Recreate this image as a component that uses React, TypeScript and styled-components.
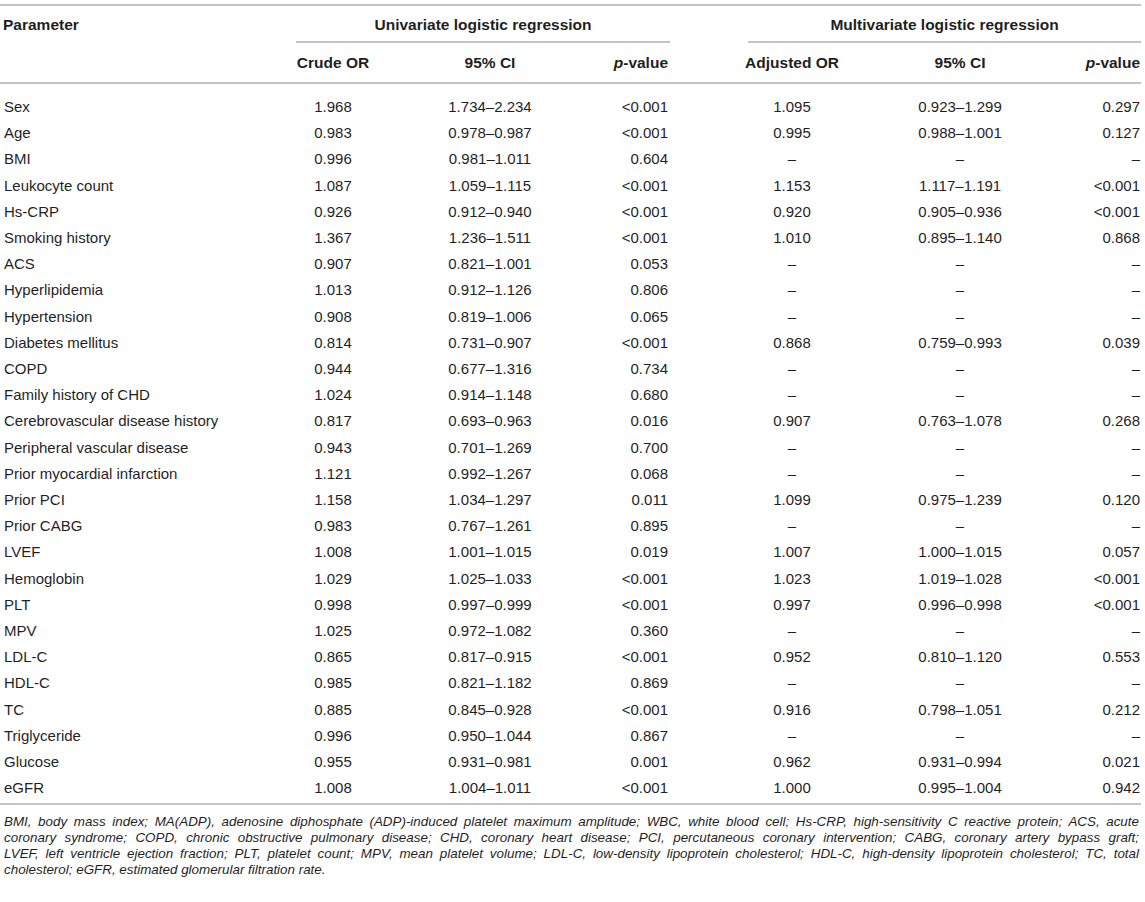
import React from "react";
import styled, { createGlobalStyle } from "styled-components";

const GlobalStyle = createGlobalStyle`
  html, body { margin: 0; padding: 0; background: #ffffff; }
  body {
    font-family: "Liberation Sans", Arial, Helvetica, sans-serif;
    color: #1f1f1f;
  }
`;

type Align = "left" | "center" | "right";

const LINE = "#c4c4c4";

const Page = styled.div`
  width: 1145px;
  padding-top: 4px;
`;

const Table = styled.table`
  width: 1141px;
  table-layout: fixed;
  border-collapse: separate;
  border-spacing: 0;
  border-top: 2px solid ${LINE};
  border-bottom: 2px solid ${LINE};
`;

const ParamHead = styled.th`
  text-align: left;
  vertical-align: top;
  font-weight: 700;
  font-size: 15.5px;
  line-height: 32px;
  padding: 3px 0 0 3px;
  border-bottom: 2px solid ${LINE};
`;

const GroupHead = styled.th`
  padding: 0;
  vertical-align: top;
`;

const GroupTitle = styled.div<{ $left: number; $right: number }>`
  margin: 0 ${(p) => p.$right}px 0 ${(p) => p.$left}px;
  padding-top: 3px;
  line-height: 32px;
  font-weight: 700;
  font-size: 15.5px;
  text-align: center;
  white-space: nowrap;
  border-bottom: 2px solid ${LINE};
`;

const SubHead = styled.th<{ $align: Align; $pr: number }>`
  text-align: ${(p) => p.$align};
  padding: 0 ${(p) => p.$pr}px 0 0;
  font-weight: 700;
  font-size: 15.5px;
  line-height: 39px;
  white-space: nowrap;
  border-bottom: 2px solid ${LINE};
`;

const Row = styled.tr`
  &:first-child > td {
    padding-top: 10px;
  }
  &:last-child > td {
    padding-bottom: 1.5px;
  }
`;

const Cell = styled.td<{ $align: Align; $pl: number; $pr: number }>`
  text-align: ${(p) => p.$align};
  padding: 0 ${(p) => p.$pr}px 0 ${(p) => p.$pl}px;
  font-size: 15px;
  line-height: 26.2px;
  white-space: nowrap;
`;

const Footnote = styled.div`
  margin-top: 9px;
  width: 1135px;
  padding-left: 4px;
  font-style: italic;
  font-size: 13.4px;
  line-height: 16px;
`;

const FootLine = styled.div<{ $justify: boolean }>`
  white-space: nowrap;
  text-align: ${(p) => (p.$justify ? "justify" : "left")};
  text-align-last: ${(p) => (p.$justify ? "justify" : "left")};
`;

const colWidths = [290, 86, 228, 68, 240, 96, 133];
const colAlign: Align[] = ["left", "center", "center", "right", "center", "center", "right"];
const colPl = [4, 0, 0, 0, 0, 0, 0];
const colPr = [0, 0, 0, 4, 0, 0, 1];

const rows: string[][] = [
  ["Sex", "1.968", "1.734–2.234", "<0.001", "1.095", "0.923–1.299", "0.297"],
  ["Age", "0.983", "0.978–0.987", "<0.001", "0.995", "0.988–1.001", "0.127"],
  ["BMI", "0.996", "0.981–1.011", "0.604", "–", "–", "–"],
  ["Leukocyte count", "1.087", "1.059–1.115", "<0.001", "1.153", "1.117–1.191", "<0.001"],
  ["Hs-CRP", "0.926", "0.912–0.940", "<0.001", "0.920", "0.905–0.936", "<0.001"],
  ["Smoking history", "1.367", "1.236–1.511", "<0.001", "1.010", "0.895–1.140", "0.868"],
  ["ACS", "0.907", "0.821–1.001", "0.053", "–", "–", "–"],
  ["Hyperlipidemia", "1.013", "0.912–1.126", "0.806", "–", "–", "–"],
  ["Hypertension", "0.908", "0.819–1.006", "0.065", "–", "–", "–"],
  ["Diabetes mellitus", "0.814", "0.731–0.907", "<0.001", "0.868", "0.759–0.993", "0.039"],
  ["COPD", "0.944", "0.677–1.316", "0.734", "–", "–", "–"],
  ["Family history of CHD", "1.024", "0.914–1.148", "0.680", "–", "–", "–"],
  ["Cerebrovascular disease history", "0.817", "0.693–0.963", "0.016", "0.907", "0.763–1.078", "0.268"],
  ["Peripheral vascular disease", "0.943", "0.701–1.269", "0.700", "–", "–", "–"],
  ["Prior myocardial infarction", "1.121", "0.992–1.267", "0.068", "–", "–", "–"],
  ["Prior PCI", "1.158", "1.034–1.297", "0.011", "1.099", "0.975–1.239", "0.120"],
  ["Prior CABG", "0.983", "0.767–1.261", "0.895", "–", "–", "–"],
  ["LVEF", "1.008", "1.001–1.015", "0.019", "1.007", "1.000–1.015", "0.057"],
  ["Hemoglobin", "1.029", "1.025–1.033", "<0.001", "1.023", "1.019–1.028", "<0.001"],
  ["PLT", "0.998", "0.997–0.999", "<0.001", "0.997", "0.996–0.998", "<0.001"],
  ["MPV", "1.025", "0.972–1.082", "0.360", "–", "–", "–"],
  ["LDL-C", "0.865", "0.817–0.915", "<0.001", "0.952", "0.810–1.120", "0.553"],
  ["HDL-C", "0.985", "0.821–1.182", "0.869", "–", "–", "–"],
  ["TC", "0.885", "0.845–0.928", "<0.001", "0.916", "0.798–1.051", "0.212"],
  ["Triglyceride", "0.996", "0.950–1.044", "0.867", "–", "–", "–"],
  ["Glucose", "0.955", "0.931–0.981", "0.001", "0.962", "0.931–0.994", "0.021"],
  ["eGFR", "1.008", "1.004–1.011", "<0.001", "1.000", "0.995–1.004", "0.942"],
];

const footLines = [
  "BMI, body mass index; MA(ADP), adenosine diphosphate (ADP)-induced platelet maximum amplitude; WBC, white blood cell; Hs-CRP, high-sensitivity C reactive protein; ACS, acute",
  "coronary syndrome; COPD, chronic obstructive pulmonary disease; CHD, coronary heart disease; PCI, percutaneous coronary intervention; CABG, coronary artery bypass graft;",
  "LVEF, left ventricle ejection fraction; PLT, platelet count; MPV, mean platelet volume; LDL-C, low-density lipoprotein cholesterol; HDL-C, high-density lipoprotein cholesterol; TC, total",
  "cholesterol; eGFR, estimated glomerular filtration rate.",
];

const PValue = () => (
  <>
    <i>p</i>-value
  </>
);

const subHeads: React.ReactNode[] = [
  "Crude OR",
  "95% CI",
  <PValue key="p1" />,
  "Adjusted OR",
  "95% CI",
  <PValue key="p2" />,
];

export default function App() {
  return (
    <Page>
      <GlobalStyle />
      <Table>
        <colgroup>
          {colWidths.map((w, i) => (
            <col key={i} style={{ width: w }} />
          ))}
        </colgroup>
        <thead>
          <tr>
            <ParamHead rowSpan={2}>Parameter</ParamHead>
            <GroupHead colSpan={3}>
              <GroupTitle $left={6} $right={2}>Univariate logistic regression</GroupTitle>
            </GroupHead>
            <GroupHead colSpan={3}>
              <GroupTitle $left={76} $right={0}>Multivariate logistic regression</GroupTitle>
            </GroupHead>
          </tr>
          <tr>
            {subHeads.map((h, i) => (
              <SubHead key={i} $align={colAlign[i + 1]} $pr={colPr[i + 1]}>
                {h}
              </SubHead>
            ))}
          </tr>
        </thead>
        <tbody>
          {rows.map((r) => (
            <Row key={r[0]}>
              {r.map((v, i) => (
                <Cell key={i} $align={colAlign[i]} $pl={colPl[i]} $pr={colPr[i]}>
                  {v}
                </Cell>
              ))}
            </Row>
          ))}
        </tbody>
      </Table>
      <Footnote>
        {footLines.map((l, i) => (
          <FootLine key={i} $justify={i < footLines.length - 1}>
            {l}
          </FootLine>
        ))}
      </Footnote>
    </Page>
  );
}
